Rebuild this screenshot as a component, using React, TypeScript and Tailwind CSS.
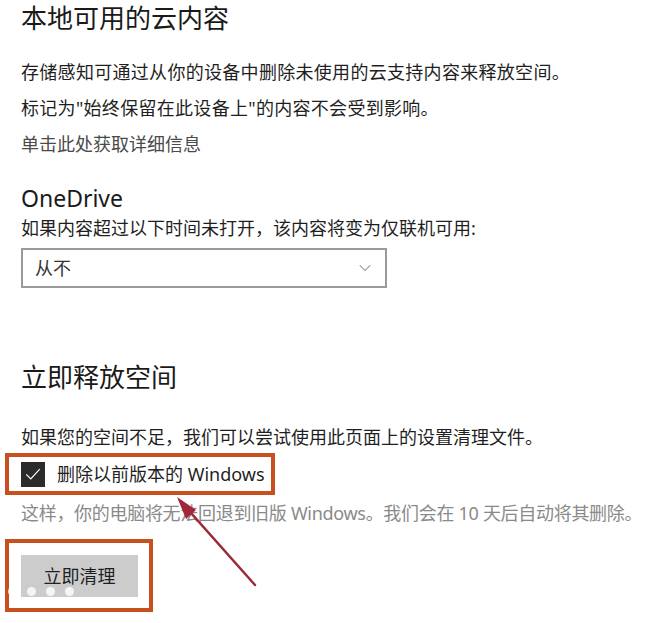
import { ChevronDown } from "lucide-react";

const font = { fontFamily: '"Noto Sans", "Noto Sans CJK SC", sans-serif' };

export default function App() {
  return (
    <div
      className="relative min-h-screen w-full overflow-hidden bg-white px-[21px] text-[#1f1f1f]"
      style={font}
    >
      {/* 本地可用的云内容 */}
      <h1 className="text-[26px] leading-[36px] font-normal text-[#1a1a1a]">本地可用的云内容</h1>
      <p className="mt-[18px] text-[18px] leading-[36px] tracking-[0.3px]">
        存储感知可通过从你的设备中删除未使用的云支持内容来释放空间。
      </p>
      <p className="text-[18px] leading-[36px] tracking-[0.3px]">标记为"始终保留在此设备上"的内容不会受到影响。</p>
      <p className="text-[18px] leading-[36px] text-[#4a4a4a]">单击此处获取详细信息</p>

      {/* OneDrive */}
      <h2 className="mt-[21px] text-[23px] leading-[30px] font-normal text-[#1a1a1a]">OneDrive</h2>
      <p className="text-[18px] leading-[30px]">如果内容超过以下时间未打开，该内容将变为仅联机可用:</p>
      <div className="mt-[5px] flex h-[40px] w-[366px] items-center justify-between border-2 border-[#9a9a9a] pl-[12px] pr-[10px]">
        <span className="text-[18px] text-[#333]">从不</span>
        <ChevronDown className="h-5 w-5 text-[#888]" strokeWidth={1.25} />
      </div>

      {/* 立即释放空间 */}
      <h2 className="mt-[71px] text-[26px] leading-[36px] font-normal text-[#1a1a1a]">立即释放空间</h2>
      <p className="mt-[24px] text-[18px] leading-[36px]">
        如果您的空间不足，我们可以尝试使用此页面上的设置清理文件。
      </p>

      <div className="-mt-[2px] -ml-[16px] flex h-[42px] w-[270px] items-center gap-[12px] border-4 border-[#c8501e] pl-[12px]">
        <div className="flex h-[25px] w-[24px] items-center justify-center bg-[#2b2b2b]">
          <svg viewBox="0 0 24 24" className="h-[18px] w-[18px]" fill="none" stroke="white" strokeWidth={1.6}>
            <path d="M3 12.5 L9 18.5 L21 5.5" />
          </svg>
        </div>
        <span className="whitespace-nowrap text-[18px] leading-none text-[#1f1f1f]">删除以前版本的 Windows</span>
      </div>

      <p className="-mr-[21px] whitespace-nowrap text-[18px] leading-[36px] tracking-[-0.3px] text-[#8a8a8a]">
        这样，你的电脑将无法回退到旧版 Windows。我们会在 10 天后自动将其删除。
      </p>

      <div className="mt-[8px] -ml-[16px] w-[148px] border-[4px] border-[#c8501e] pt-[12px] pb-[11px] pl-[12px] pr-[11px]">
        <button className="flex h-[42px] w-full items-center justify-center bg-[#cccccc] text-[18px] text-[#1f1f1f]">
          立即清理
        </button>
      </div>

      {/* loading dots overlay */}
      <div className="absolute left-[8px] top-[587px] flex gap-[10px]">
        <span className="h-[9px] w-[9px] rounded-full bg-white/80" />
        <span className="h-[9px] w-[9px] rounded-full bg-white/80" />
        <span className="h-[9px] w-[9px] rounded-full bg-white/80" />
        <span className="h-[9px] w-[9px] rounded-full bg-white/80" />
      </div>

      {/* red arrow annotation */}
      <svg className="pointer-events-none absolute left-0 top-0" width="658" height="623">
        <line x1="255" y1="585" x2="183" y2="504" stroke="#9c2a3a" strokeWidth="2.5" strokeLinecap="round" />
        <polygon points="177,497 196,510 186,519" fill="#a0283a" />
      </svg>
    </div>
  );
}
